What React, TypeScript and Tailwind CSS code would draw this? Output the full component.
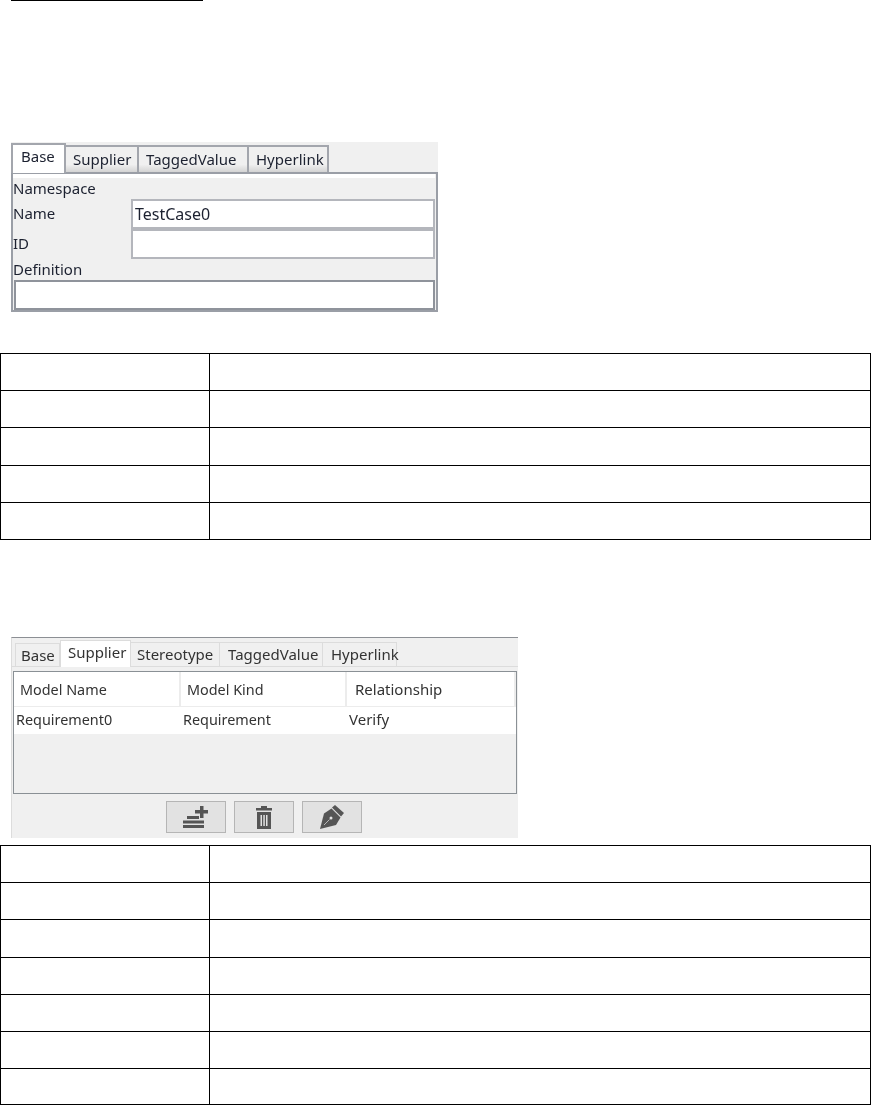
import React from 'react';

const uiFont = { fontFamily: '"Noto Sans", sans-serif' };

function EmptyTable({ rows, rowHeights }: { rows: number; rowHeights: string[] }) {
  return (
    <table className="w-[871px] table-fixed border-collapse border border-black">
      <colgroup>
        <col className="w-[209px]" />
        <col />
      </colgroup>
      <tbody>
        {Array.from({ length: rows }).map((_, i) => (
          <tr key={i} className={rowHeights[i]}>
            <td className="border border-black p-0"></td>
            <td className="border border-black p-0"></td>
          </tr>
        ))}
      </tbody>
    </table>
  );
}

function BaseTabPanel() {
  const tab =
    'h-[27px] bg-linear-to-b from-[#f0f0f0] from-70% to-[#d4d4d4] border-2 border-b-0 border-[#a3a6ad] border-l-0 pt-[5px]';
  return (
    <div className="ml-[11px] w-[427px] h-[170px] bg-[#f0f0f0] flex flex-col text-[15px] leading-none text-[#1c2130] blur-[0.5px]">
      <div className="flex items-end h-[30px] shrink-0">
        <div className="w-[55px] h-[30px] bg-white border-2 border-b-0 border-[#a3a6ad] pl-[8px] pt-[4px] -mb-px z-10">Base</div>
        <div className={`w-[73px] pl-[7px] ${tab}`}>Supplier</div>
        <div className={`w-[110px] pl-[7px] ${tab}`}>TaggedValue</div>
        <div className={`w-[80px] pl-[7px] ${tab}`}>Hyperlink</div>
      </div>
      <div className="flex-1 flex flex-col border-2 border-[#9a9ea6] pr-px">
        <div className="h-[4px] bg-white"></div>
        <div className="h-[20px] pt-[3px]">Namespace</div>
        <div className="flex h-[30px] mt-[1px]">
          <div className="w-[118px] pt-[7px]">Name</div>
          <div className="flex-1 bg-white border-2 border-[#b4b6bc] pl-[2px] pt-[5px] text-[16px]">TestCase0</div>
        </div>
        <div className="flex h-[30px]">
          <div className="w-[118px] pt-[7px]">ID</div>
          <div className="flex-1 bg-white border-2 border-[#b4b6bc]"></div>
        </div>
        <div className="h-[21px] pt-[3px]">Definition</div>
        <div className="flex-1 bg-white border-2 border-[#8f939b] ml-px"></div>
      </div>
    </div>
  );
}

function SupplierTabPanel() {
  return (
    <div className="ml-[11px] w-[507px] h-[201px] bg-[#f0f0f0] border-t border-t-[#8c8f94] border-l border-l-[#dcdcdc] flex flex-col text-[14.400px] leading-none text-[#333333] blur-[0.5px]">
      <div className="flex items-end h-[29px] pl-[3px] border-b border-[#dcdcdc] shrink-0 text-[15px]">
        <div className="w-[45px] h-[24px] border border-[#dcdcdc] border-b-0 pl-[5px] pt-[4px] -mb-px">Base</div>
        <div className="w-[71px] h-[27px] bg-white border border-[#dcdcdc] border-b-0 pl-[7px] pt-[4px] -mb-px">Supplier</div>
        <div className="w-[89px] h-[24px] border-r border-t border-[#dcdcdc] pl-[6px] pt-[4px]">Stereotype</div>
        <div className="w-[103px] h-[24px] border-r border-t border-[#dcdcdc] pl-[8px] pt-[4px]">TaggedValue</div>
        <div className="w-[74px] h-[24px] border-r border-t border-[#dcdcdc] pl-[8px] pt-[4px]">Hyperlink</div>
      </div>
      <div className="mt-[4px] ml-[1px] w-[504px] h-[123px] border border-[#8a9095] flex flex-col">
        <div className="flex h-[35px] bg-white border-b border-[#ececec]">
          <div className="w-[167px] border-r-2 border-[#ececec] pl-[6px] pt-[11px]">Model Name</div>
          <div className="w-[166px] border-r-2 border-[#ececec] pl-[6px] pt-[11px]">Model Kind</div>
          <div className="flex-1 border-r-2 border-[#ececec] pl-[8px] pt-[10px] text-[15px]">Relationship</div>
        </div>
        <div className="flex h-[27px] bg-white">
          <div className="w-[169px] pl-[2px] pt-[6px]">Requirement0</div>
          <div className="w-[166px] pt-[6px]">Requirement</div>
          <div className="flex-1 pt-[5px] text-[15px]">Verify</div>
        </div>
      </div>
      <div className="flex justify-center gap-[8px] mt-[7px] pr-[3px]">
        <button className="w-[60px] h-[32px] bg-[#e2e2e2] border border-[#b5b5b5] flex items-center justify-center">
          <svg width="25" height="22" viewBox="0 0 25 22" fill="#555555">
            <path d="M12 4h5V0h3.500v4H25v3.500h-4.500V12H17V7.500h-5z" />
            <path d="M4 10h12v3H4zM0 14.500h21v3H0zM0 19h21v3H0z" />
          </svg>
        </button>
        <button className="w-[60px] h-[32px] bg-[#e2e2e2] border border-[#b5b5b5] flex items-center justify-center">
          <svg width="16" height="23" viewBox="0 0 16 23" fill="#555555">
            <path d="M5 0h6v2h5v2.500H0V2h5z" />
            <path d="M1 6h14v17H1zM4.500 9v11h1.500V9zM7.300 9v11h1.500V9zM10 9v11h1.500V9z" fillRule="evenodd" />
          </svg>
        </button>
        <button className="w-[60px] h-[32px] bg-[#e2e2e2] border border-[#b5b5b5] flex items-center justify-center">
          <svg width="24" height="24" viewBox="0 0 24 24" fill="#555555">
            <path d="M15 0l9 8-3 3.500-9-9z" />
            <path d="M11.500 3.500l9 9-4.500 7.500L0 24l4-15.500z" />
            <path d="M4 20l5.500-5.500" stroke="#e2e2e2" strokeWidth="0.7" />
            <circle cx="11" cy="13" r="1.500" fill="#e2e2e2" />
          </svg>
        </button>
      </div>
    </div>
  );
}

export default function App() {
  return (
    <div className="w-[871px] h-[1105px] bg-white overflow-hidden flex flex-col" style={uiFont}>
      <div className="ml-[11px] w-[192px] h-px bg-black shrink-0"></div>
      <div className="mt-[141px] shrink-0">
        <BaseTabPanel />
      </div>
      <div className="mt-[41px] shrink-0">
        <EmptyTable rows={5} rowHeights={['h-[37px]', 'h-[37px]', 'h-[38px]', 'h-[37px]', 'h-[37px]']} />
      </div>
      <div className="mt-[97px] shrink-0">
        <SupplierTabPanel />
      </div>
      <div className="mt-[7px] shrink-0">
        <EmptyTable
          rows={7}
          rowHeights={['h-[37px]', 'h-[37px]', 'h-[38px]', 'h-[37px]', 'h-[37px]', 'h-[37px]', 'h-[36px]']}
        />
      </div>
    </div>
  );
}
